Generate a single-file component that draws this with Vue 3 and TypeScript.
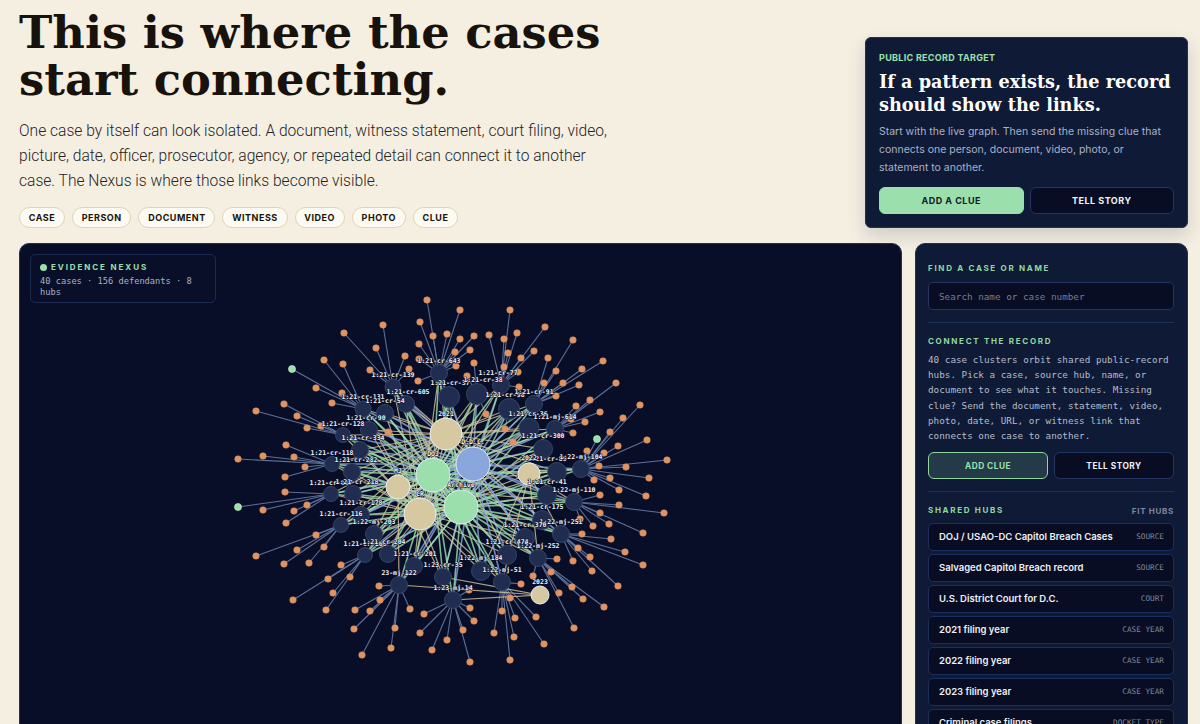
<script setup lang="ts">
import { computed } from "vue";

type Pt = [number, number];
interface CaseNode {
  id: string;
  x: number;
  y: number;
  r: number;
  lx?: number;
  ly?: number;
}
interface Hub {
  id: string;
  label: string;
  x: number;
  y: number;
  r: number;
  fill: string;
  ly: number;
}

const GREEN = "#9be0ac";
const BEIGE = "#d6c8a0";
const BLUE = "#89a6dd";

const hubs: Hub[] = [
  { id: "2021", label: "2021", x: 446, y: 434, r: 16, fill: BEIGE, ly: 416 },
  { id: "dc", label: "D.D.C.", x: 473, y: 464, r: 17, fill: BLUE, ly: 444 },
  { id: "doj", label: "DOJ", x: 433, y: 475, r: 17, fill: GREEN, ly: 456 },
  { id: "mj", label: "MJ", x: 398, y: 487, r: 12, fill: BEIGE, ly: 473 },
  { id: "cr", label: "CR", x: 420, y: 514, r: 16, fill: BEIGE, ly: 496 },
  { id: "arch", label: "Archive", x: 461, y: 507, r: 17, fill: GREEN, ly: 487 },
  { id: "2022", label: "2022", x: 529, y: 474, r: 11, fill: BEIGE, ly: 460 },
  { id: "2023", label: "2023", x: 540, y: 595, r: 9, fill: BEIGE, ly: 584 },
];

const cases: CaseNode[] = [
  { id: "1:21-cr-139", x: 393, y: 387, r: 8 },
  { id: "1:21-cr-605", x: 406, y: 404, r: 8.5, lx: 408 },
  { id: "1:21-cr-131", x: 363, y: 409, r: 8 },
  { id: "1:21-cr-54", x: 385, y: 413, r: 8.5 },
  { id: "1:21-cr-90", x: 369, y: 430, r: 8.5, lx: 366 },
  { id: "1:21-cr-128", x: 343, y: 435, r: 7.5 },
  { id: "1:21-cr-334", x: 360, y: 450, r: 8.5, lx: 363 },
  { id: "1:21-cr-118", x: 332, y: 464, r: 7.5 },
  { id: "1:21-cr-282", x: 352, y: 472, r: 8.5, lx: 356 },
  { id: "1:21-cr-643", x: 439, y: 373, r: 8.5 },
  { id: "1:21-cr-37", x: 449, y: 397, r: 10.5, lx: 450 },
  { id: "1:21-cr-38", x: 477, y: 394, r: 10.5, lx: 483 },
  { id: "1:21-cr-77", x: 501, y: 385, r: 8.5, lx: 498 },
  { id: "1:21-cr-98", x: 509, y: 409, r: 10.5, lx: 505 },
  { id: "1:21-cr-91", x: 534, y: 404, r: 8.5 },
  { id: "1:21-cr-36", x: 529, y: 428, r: 10, lx: 528 },
  { id: "1:21-mj-614", x: 555, y: 429, r: 8.5 },
  { id: "1:21-cr-300", x: 543, y: 449, r: 9.5 },
  { id: "1:21-cr-89", x: 557, y: 472, r: 9.5, lx: 547, ly: 461 },
  { id: "1:22-mj-104", x: 581, y: 469, r: 8.5 },
  { id: "1:21-cr-117", x: 331, y: 494, r: 7.5 },
  { id: "1:21-cr-218", x: 353, y: 494, r: 8.5, lx: 357 },
  { id: "1:21-cr-178", x: 361, y: 515, r: 8.5 },
  { id: "1:21-cr-116", x: 341, y: 525, r: 7.5 },
  { id: "1:22-mj-203", x: 374, y: 534, r: 8.5 },
  { id: "1:21-cr-106", x: 365, y: 555, r: 7.5 },
  { id: "1:21-cr-204", x: 388, y: 554, r: 8.5, lx: 384 },
  { id: "1:21-cr-201", x: 414, y: 566, r: 8.5, lx: 415 },
  { id: "23-mj-122", x: 399, y: 585, r: 8.5 },
  { id: "1:23-cr-35", x: 443, y: 577, r: 8.5 },
  { id: "1:23-mj-14", x: 453, y: 600, r: 8.5 },
  { id: "1:21-cr-41", x: 547, y: 495, r: 9.5 },
  { id: "1:22-mj-110", x: 574, y: 502, r: 8.5 },
  { id: "1:21-cr-175", x: 542, y: 520, r: 9.5 },
  { id: "1:22-mj-251", x: 561, y: 534, r: 8.5 },
  { id: "1:21-cr-370", x: 525, y: 538, r: 9.5 },
  { id: "1:21-cr-474", x: 507, y: 555, r: 9.5 },
  { id: "1:22-mj-252", x: 538, y: 558, r: 8.5 },
  { id: "1:22-mj-184", x: 481, y: 571, r: 9.5 },
  { id: "1:22-mj-51", x: 502, y: 582, r: 8.5 },
];

const leaves: Pt[] = [
  [427, 300], [420, 322], [383, 325], [344, 333], [433, 336], [447, 334], [419, 344], [376, 348],
  [405, 356], [419, 359], [324, 360], [343, 364], [370, 370], [409, 369], [418, 381], [316, 388],
  [342, 393], [332, 403], [284, 404], [256, 411], [297, 416], [321, 426], [307, 428], [388, 432],
  [286, 445], [263, 456], [294, 457], [238, 459], [305, 467], [285, 477], [460, 310], [510, 310],
  [545, 327], [517, 333], [489, 335], [474, 336], [460, 339], [504, 339], [573, 340], [470, 350],
  [455, 352], [508, 353], [534, 351], [521, 358], [548, 358], [603, 361], [474, 363], [456, 366],
  [504, 367], [582, 369], [556, 371], [518, 372], [467, 376], [616, 383], [544, 383], [563, 383],
  [579, 385], [519, 387], [556, 396], [590, 400], [576, 406], [640, 405], [600, 412], [486, 414],
  [623, 418], [571, 419], [585, 422], [505, 429], [610, 432], [573, 433], [513, 442], [647, 440],
  [618, 446], [587, 451], [604, 453], [667, 460], [599, 466], [626, 467], [649, 478], [610, 478],
  [594, 480], [285, 492], [307, 505], [263, 510], [294, 511], [286, 523], [316, 535], [256, 556],
  [297, 550], [324, 547], [284, 564], [309, 563], [341, 565], [328, 579], [350, 577], [333, 593],
  [379, 586], [293, 600], [326, 610], [355, 610], [380, 600], [370, 611], [410, 609], [424, 614],
  [354, 629], [395, 628], [420, 633], [447, 640], [391, 648], [432, 650], [362, 655], [619, 490],
  [600, 495], [646, 496], [619, 505], [664, 513], [600, 513], [580, 519], [593, 526], [609, 524],
  [643, 533], [582, 534], [611, 539], [578, 548], [625, 552], [590, 557], [557, 559], [573, 561],
  [643, 565], [592, 571], [551, 572], [533, 576], [521, 584], [618, 586], [572, 587], [469, 590],
  [559, 593], [510, 598], [583, 599], [604, 607], [470, 608], [502, 611], [515, 618], [536, 617],
  [474, 621], [574, 628], [463, 630], [494, 633], [514, 637], [544, 644], [510, 660], [470, 662],
];

const strays: Pt[] = [[292, 369], [597, 439], [238, 507]];

const hubNames = [
  { name: "DOJ / USAO-DC Capitol Breach Cases", tag: "SOURCE" },
  { name: "Salvaged Capitol Breach record", tag: "SOURCE" },
  { name: "U.S. District Court for D.C.", tag: "COURT" },
  { name: "2021 filing year", tag: "CASE YEAR" },
  { name: "2022 filing year", tag: "CASE YEAR" },
  { name: "2023 filing year", tag: "CASE YEAR" },
  { name: "Criminal case filings", tag: "DOCKET TYPE" },
];

const kinds = ["CASE", "PERSON", "DOCUMENT", "WITNESS", "VIDEO", "PHOTO", "CLUE"];

function nearest(p: Pt): CaseNode {
  let best = cases[0];
  let bestD = Infinity;
  for (const c of cases) {
    const d = Math.hypot(c.x - p[0], c.y - p[1]);
    if (d < bestD) {
      bestD = d;
      best = c;
    }
  }
  return best;
}

function hubById(id: string): Hub {
  return hubs.find((h) => h.id === id) as Hub;
}

const leafLinks = computed(() =>
  [...leaves, ...strays].map((p) => {
    const c = nearest(p);
    return { x1: p[0], y1: p[1], x2: c.x, y2: c.y };
  }),
);

const hubLinks = computed(() => {
  const out: { x1: number; y1: number; x2: number; y2: number; color: string; w: number }[] = [];
  for (const c of cases) {
    const m = c.id.match(/(?:1:)?(\d\d)-(cr|mj)/);
    const year = m ? "20" + m[1] : "2021";
    const type = m ? m[2] : "cr";
    for (const id of [year, type, "dc", "arch", "doj"]) {
      const h = hubById(id);
      out.push({ x1: c.x, y1: c.y, x2: h.x, y2: h.y, color: h.fill, w: h.fill === BEIGE ? 1.2 : 1.6 });
    }
  }
  return out;
});
</script>

<template>
  <div class="page">
    <header class="hero">
      <div class="intro">
        <h1>This is where the cases start connecting.</h1>
        <p>
          One case by itself can look isolated. A document, witness statement, court filing, video,
          picture, date, officer, prosecutor, agency, or repeated detail can connect it to another
          case. The Nexus is where those links become visible.
        </p>
        <div class="pills">
          <span v-for="k in kinds" :key="k" class="pill">{{ k }}</span>
        </div>
      </div>
      <aside class="target">
        <div class="eyebrow">PUBLIC RECORD TARGET</div>
        <h2>If a pattern exists, the record should show the links.</h2>
        <p>
          Start with the live graph. Then send the missing clue that connects one person, document,
          video, photo, or statement to another.
        </p>
        <div class="btns">
          <button class="btn btn--solid">ADD A CLUE</button>
          <button class="btn btn--dark">TELL STORY</button>
        </div>
      </aside>
    </header>

    <main class="board">
      <section class="graph">
        <div class="legend">
          <div class="legend__title"><i></i>EVIDENCE NEXUS</div>
          <div class="legend__meta">40 cases · 156 defendants · 8 hubs</div>
        </div>
        <svg class="canvas" viewBox="20 244 881 480" width="881" height="480">
          <line
            v-for="(l, i) in leafLinks"
            :key="'l' + i"
            :x1="l.x1"
            :y1="l.y1"
            :x2="l.x2"
            :y2="l.y2"
            stroke="#5d7099"
            stroke-width="1.1"
          />
          <line
            v-for="(l, i) in hubLinks"
            :key="'h' + i"
            :x1="l.x1"
            :y1="l.y1"
            :x2="l.x2"
            :y2="l.y2"
            :stroke="l.color"
            :stroke-width="l.w"
            opacity="0.8"
          />
          <circle
            v-for="(p, i) in leaves"
            :key="'o' + i"
            :cx="p[0]"
            :cy="p[1]"
            r="3.3"
            fill="#e2935f"
            stroke="#c98a63"
            stroke-width="0.5"
          />
          <circle
            v-for="(p, i) in strays"
            :key="'g' + i"
            :cx="p[0]"
            :cy="p[1]"
            r="3.5"
            fill="#9be0ac"
            stroke="#c9efd2"
            stroke-width="0.7"
          />
          <circle
            v-for="c in cases"
            :key="c.id"
            :cx="c.x"
            :cy="c.y"
            :r="c.r"
            fill="#212d50"
            stroke="#36476c"
            stroke-width="0.9"
          />
          <circle
            v-for="h in hubs"
            :key="h.id"
            :cx="h.x"
            :cy="h.y"
            :r="h.r"
            :fill="h.fill"
            stroke="#e9ecf4"
            stroke-width="1"
          />
          <text
            v-for="c in cases"
            :key="'t' + c.id"
            class="nlabel"
            :x="c.lx ?? c.x"
            :y="c.ly ?? c.y - c.r - 2"
          >{{ c.id }}</text>
          <text v-for="h in hubs" :key="'t' + h.id" class="nlabel" :x="h.x" :y="h.ly">{{ h.label }}</text>
        </svg>
      </section>

      <aside class="side">
        <div class="side__label">FIND A CASE OR NAME</div>
        <input class="search" type="text" placeholder="Search name or case number" />
        <hr />
        <div class="side__label">CONNECT THE RECORD</div>
        <p class="side__text">
          40 case clusters orbit shared public-record hubs. Pick a case, source hub, name, or
          document to see what it touches. Missing clue? Send the document, statement, video,
          photo, date, URL, or witness link that connects one case to another.
        </p>
        <div class="btns btns--side">
          <button class="btn btn--ghost">ADD CLUE</button>
          <button class="btn btn--dark">TELL STORY</button>
        </div>
        <hr />
        <div class="hubs__head">
          <div class="side__label">SHARED HUBS</div>
          <span>FIT HUBS</span>
        </div>
        <div class="hubs">
          <div v-for="h in hubNames" :key="h.name" class="hub">
            <b>{{ h.name }}</b>
            <span>{{ h.tag }}</span>
          </div>
        </div>
      </aside>
    </main>
  </div>
</template>

<style>
html,
body {
  margin: 0;
  background: #f5efe2;
}
</style>

<style scoped>
.page {
  height: 724px;
  overflow: hidden;
  box-sizing: border-box;
  padding: 9px 12px 0 19px;
  font-family: Inter, "Liberation Sans", sans-serif;
  background: #f5efe2;
}
.hero {
  display: flex;
  justify-content: space-between;
  align-items: flex-start;
}
.intro {
  width: 600px;
}
h1 {
  margin: 0;
  font-family: "DejaVu Serif", serif;
  font-size: 44.8px;
  line-height: 47px;
  font-weight: 700;
  letter-spacing: 0;
  color: #17130c;
  width: 620px;
}
.intro p {
  margin: 16px 0 0;
  width: 600px;
  font-family: Roboto, sans-serif;
  font-size: 15.6px;
  font-weight: 300;
  line-height: 25px;
  color: #26231e;
}
.pills {
  display: flex;
  gap: 7px;
  margin-top: 13px;
}
.pill {
  height: 21px;
  box-sizing: border-box;
  display: flex;
  align-items: center;
  padding: 0 8.8px;
  border: 1px solid #dfd3b0;
  border-radius: 11px;
  background: #fdfaf3;
  font-size: 9px;
  font-weight: 700;
  letter-spacing: 0.5px;
  color: #17130c;
}
.target {
  width: 323px;
  height: 191px;
  box-sizing: border-box;
  margin-top: 28px;
  padding: 13px 13px;
  border-radius: 6px;
  border: 1px solid #1d3259;
  background: #0f1a36;
  box-shadow: 0 8px 18px rgba(15, 26, 54, 0.16);
}
.eyebrow {
  font-size: 9px;
  line-height: 13px;
  font-weight: 700;
  letter-spacing: 0.3px;
  color: #9be0ac;
}
.target h2 {
  margin: 6px 0 0;
  font-family: "DejaVu Serif", serif;
  font-size: 17.7px;
  line-height: 23px;
  font-weight: 700;
  letter-spacing: 0;
  color: #fff;
}
.target p {
  margin: 7px 0 0;
  font-size: 10.5px;
  line-height: 18px;
  color: #aab1c6;
}
.btns {
  display: grid;
  grid-template-columns: 1fr 1fr;
  gap: 6px;
  margin-top: 10px;
}
.btn {
  height: 27px;
  padding: 0;
  border-radius: 6px;
  font-family: Inter, sans-serif;
  font-size: 9px;
  font-weight: 700;
  letter-spacing: 0.5px;
}
.btn--solid {
  border: 1px solid #9be0ac;
  background: #9be0ac;
  color: #10182c;
}
.btn--dark {
  border: 1px solid #24365f;
  background: #080d24;
  color: #f1f2f5;
}
.btn--ghost {
  border: 1px solid #8fd8a0;
  background: #243a48;
  color: #9be0ac;
}
.board {
  display: grid;
  grid-template-columns: 883px 273px;
  gap: 13px;
  margin-top: 15px;
  height: 600px;
}
.graph {
  position: relative;
  box-sizing: border-box;
  border: 1px solid #1d3259;
  border-top-width: 1.5px;
  border-radius: 10px;
  background: #080e27;
  overflow: hidden;
}
.canvas {
  display: block;
}
.nlabel {
  font-family: "DejaVu Sans Mono", monospace;
  font-size: 6.5px;
  font-weight: 700;
  fill: #f2f4f8;
  stroke: #080e27;
  stroke-width: 1px;
  paint-order: stroke;
  text-anchor: middle;
}
.legend {
  position: absolute;
  left: 10px;
  top: 10px;
  width: 186px;
  height: 49px;
  box-sizing: border-box;
  padding: 7px 9px;
  border: 1px solid #1a2a50;
  border-radius: 5px;
  background: #090f28;
}
.legend__title {
  display: flex;
  align-items: center;
  gap: 4px;
  font-size: 8px;
  line-height: 10px;
  font-weight: 700;
  letter-spacing: 1.9px;
  color: #9be0ac;
}
.legend__title i {
  width: 7px;
  height: 7px;
  border-radius: 50%;
  background: #9be0ac;
}
.legend__meta {
  margin-top: 4px;
  font-family: "DejaVu Sans Mono", monospace;
  font-size: 8.7px;
  line-height: 11px;
  color: #a9afc1;
}
.side {
  box-sizing: border-box;
  padding: 19px 13px 0 12px;
  border: 1px solid #1d3259;
  border-top-width: 1.5px;
  border-radius: 10px;
  background: #0f1a36;
  overflow: hidden;
}
.side__label {
  font-size: 8px;
  line-height: 11px;
  font-weight: 700;
  letter-spacing: 1.7px;
  color: #8fd8a0;
}
.search {
  display: block;
  width: 100%;
  height: 28px;
  box-sizing: border-box;
  margin-top: 8px;
  padding: 0 10px;
  border: 1px solid #24365f;
  border-radius: 5px;
  background: #080d24;
  font-family: "DejaVu Sans Mono", monospace;
  font-size: 9.3px;
  color: #fff;
}
.search::placeholder {
  color: #767d92;
}
hr {
  height: 1px;
  margin: 12px 0 13px;
  border: 0;
  background: #1e2f57;
}
.side__text {
  margin: 5px 0 0;
  font-family: "DejaVu Sans Mono", monospace;
  font-size: 9.3px;
  line-height: 15.2px;
  color: #b4bccb;
}
.btns--side {
  margin-top: 9px;
}
.btns--side .btn {
  font-size: 8.3px;
}
.hubs__head {
  display: flex;
  justify-content: space-between;
  align-items: center;
}
.hubs__head span {
  font-size: 8px;
  font-weight: 700;
  letter-spacing: 0.7px;
  color: #7e869e;
}
.hubs {
  display: flex;
  flex-direction: column;
  gap: 3.5px;
  margin-top: 7px;
}
.hub {
  flex: none;
  height: 27.5px;
  box-sizing: border-box;
  display: flex;
  justify-content: space-between;
  align-items: center;
  padding: 0 9px 0 10px;
  border: 1px solid #1d2f58;
  border-radius: 5px;
  background: #080d24;
}
.hub b {
  font-size: 9.5px;
  font-weight: 600;
  color: #eef0f4;
}
.hub span {
  font-family: "DejaVu Sans Mono", monospace;
  font-size: 7.7px;
  color: #7f8799;
}
</style>
